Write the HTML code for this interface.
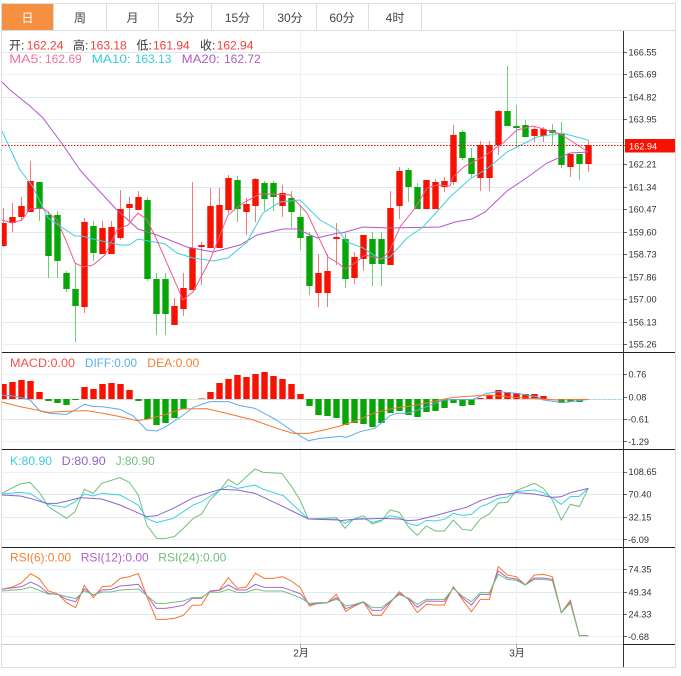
<!DOCTYPE html>
<html><head><meta charset="utf-8"><title>K线图</title>
<style>
html,body{margin:0;padding:0;background:#fff;width:681px;height:676px;overflow:hidden}
svg{display:block;filter:blur(.3px)}
text{font-family:"Liberation Sans","Noto Sans CJK SC",sans-serif;font-size:12px}
.ax text{font-size:9.2px;fill:#333}
.tab text{fill:#444;text-anchor:middle}
polyline{fill:none;stroke-width:1}
.z polyline{vector-effect:non-scaling-stroke}
</style></head><body>
<svg width="681" height="676" viewBox="0 0 681 676" xmlns="http://www.w3.org/2000/svg">
<defs><clipPath id="c"><rect x="2" y="31" width="621" height="613"/></clipPath></defs>
<rect x="1.5" y="3.5" width="674" height="664" fill="#fff" stroke="#ddd"/>
<!-- tabs -->
<rect x="2" y="4" width="51" height="26" fill="#f58f42"/>
<path d="M53.5 4V30M106.5 4V30M158.5 4V30M211.5 4V30M263.5 4V30M316.5 4V30M368.5 4V30M421.5 4V30M2 30.5H675" stroke="#ddd" fill="none"/>
<g class="tab">
<text x="27.5" y="22" style="fill:#fff">日</text><text x="80" y="22">周</text><text x="132.5" y="22">月</text><text x="185" y="22">5分</text><text x="237.5" y="22">15分</text><text x="290" y="22">30分</text><text x="342" y="22">60分</text><text x="395" y="22">4时</text>
</g>
<!-- grid -->
<path d="M2 52.5H623M2 97.5H623M2 142.5H623M2 187.5H623M2 232.5H623M2 277.5H623M2 322.5H623M2 419.5H623M2 494.5H623M2 517.5H623M2 592.5H623M2 614.5H623" stroke="#dfe8ed" fill="none"/>
<path d="M2 74.5H623M2 119.5H623M2 164.5H623M2 209.5H623M2 254.5H623M2 299.5H623M2 344.5H623M2 374.5H623M2 441.5H623M2 472.5H623M2 539.5H623M2 569.5H623M2 636.5H623M300.5 31V644M516.5 31V644" stroke="#ebf1f4" fill="none"/>
<g clip-path="url(#c)">
<!-- wicks -->
<path fill="none" stroke="#f87878" d="M3.5 208V247M12.5 203V232M21.5 197V221M30.5 161V212M84.5 218V313M102.5 221V254M111.5 221V254M120.5 190V240M129.5 197V222M138.5 191V210M174.5 298V325M183.5 273V316M192.5 182V290M201.5 242V285M210.5 188V248M219.5 188V248M228.5 175V213M246.5 198V235M255.5 178V222M282.5 185V217M318.5 254V307M327.5 254V307M336.5 223V265M354.5 252V284M363.5 235V271M390.5 191V265M399.5 167V219M426.5 180V209M435.5 179V209M444.5 177V192M453.5 125V185M480.5 141V191M489.5 141V191M498.5 110V155M534.5 127V142M543.5 127V142M570.5 154V177M588.5 140V172"/>
<path fill="none" stroke="#70cc70" d="M39.5 182V221M48.5 211V278M57.5 211V278M66.5 271V292M75.5 263V342M93.5 221V261M147.5 197V281M156.5 273V335M165.5 273V335M237.5 176V222M264.5 181V211M273.5 181V211M291.5 191V228M300.5 205V250M309.5 232V295M345.5 233V288M372.5 232V286M381.5 232V286M408.5 168V202M417.5 183V209M462.5 130V160M471.5 148V178M507.5 66V126M516.5 105V148M525.5 120V137M552.5 124V145M561.5 122V168M579.5 154V180"/>
<!-- bodies -->
<path fill="none" stroke="#f61100" stroke-width="6.4" d="M3.5 223V246M12.5 217V223M21.5 206V217M30.5 181V212M84.5 222V307M102.5 228V254M111.5 227V254M120.5 209V238M129.5 204V208M138.5 197V210M174.5 306V325M183.5 288V309M192.5 248V290M201.5 245V247M210.5 206V248M219.5 205V248M228.5 178V210M246.5 204V212M255.5 179V206M282.5 193V206M318.5 273V293M327.5 271V293M336.5 237V239M354.5 257V278M363.5 235V259M390.5 208V265M399.5 171V206M426.5 180V209M435.5 182V209M444.5 181V187M453.5 135V182M480.5 145V178M489.5 145V178M498.5 111V145M534.5 129V136M543.5 129V136M570.5 154V167M588.5 145V164"/>
<path fill="none" stroke="#08a508" stroke-width="6.4" d="M39.5 182V209M48.5 215V256M57.5 215V261M66.5 273V289M75.5 289V306M93.5 226V253M147.5 200V279M156.5 279V314M165.5 279V314M237.5 180V209M264.5 183V199M273.5 183V197M291.5 198V212M300.5 217V238M309.5 236V286M345.5 239V279M372.5 239V264M381.5 239V264M408.5 170V187M417.5 187V209M462.5 132V158M471.5 158V174M507.5 111V126M516.5 126V128M525.5 125V137M552.5 130V133M561.5 134V165M579.5 154V164"/>
<!-- MA lines -->
<polyline stroke="#b158c8" points="2,82 10,90 30,106 43,118 63,145 80,170 88,179 117,210 138,229 157,235 187,247 213,252 240,245 257,235 283,229 297,229 317,238 338,233 342,233 363,227 390,228 440,227 455,222 472,219 485,212 507,191 525,179 547,163 570,153 588,152"/>
<polyline stroke="#3fcfe0" points="2,131 20,170 27,179 33,187 48,218 75,236 82,236 93,239 120,245 129,245 138,239 165,244 177,253 193,258 213,261 228,258 247,242 263,213 280,202 300,200 320,220 338,230 340,233 347,242 363,248 380,259 390,257 407,238 423,227 450,197 470,179 488,168 507,152 537,137 562,133 588,140"/>
<polyline stroke="#ee5c8e" points="2,220 12,223 22,220 30,209 43,208 57,220 67,243 75,263 83,267 93,265 105,255 117,230 128,225 138,213 147,220 156,238 183,300 193,292 210,260 228,215 243,203 260,194 273,194 290,195 307,213 328,257 338,263 345,269 355,263 365,255 382,259 390,250 400,227 415,208 427,188 437,185 450,186 453,177 465,166 483,157 503,143 517,130 533,126 560,134 573,142 588,152"/>
<!-- last price dashed -->
<path d="M2 145.5H623" stroke="#e8120a" stroke-dasharray="1.5 1.5" fill="none"/>
<!-- MACD bars -->
<path d="M2 399.5H623" stroke="#d8dde0" fill="none"/>
<path fill="none" stroke="#f61100" stroke-width="6.4" d="M3.5 384V399M12.5 382V399M21.5 380V399M30.5 381V399M39.5 392V399M84.5 387V399M93.5 389V399M102.5 384V399M111.5 383V399M120.5 384V399M129.5 390V399M201.5 398.5V399M210.5 392V399M219.5 383V399M228.5 379V399M237.5 375V399M246.5 377V399M255.5 374V399M264.5 372V399M273.5 376V399M282.5 379V399M291.5 384V399M300.5 394V399M480.5 398V399M489.5 395V399M498.5 390V399M507.5 392V399M516.5 393V399M525.5 394V399M534.5 394V399M543.5 396V399"/>
<path fill="none" stroke="#08a508" stroke-width="6.4" d="M48.5 399V401M57.5 399V403M66.5 399V405M75.5 399V400M138.5 399V401M147.5 399V419M156.5 399V425M165.5 399V423M174.5 399V418M183.5 399V409M309.5 399V406M318.5 399V415M327.5 399V416M336.5 399V418M345.5 399V425M354.5 399V423M363.5 399V424M372.5 399V427M381.5 399V423M390.5 399V413M399.5 399V411M408.5 399V415M417.5 399V417M426.5 399V412M435.5 399V411M444.5 399V408M453.5 399V403M462.5 399V406M471.5 399V405M561.5 399V403M570.5 399V402M579.5 399V402"/>
<path d="M588 399.5H622" stroke="#a8d4f4" stroke-dasharray="3 2" fill="none"/>
<g class="z">
<g transform="translate(0 350) scale(.33333)">
<polyline stroke="#5aacf0" points="0,135 30,137 60,142 90,150 120,183 150,190 200,193 225,180 253,163 280,170 305,170 360,178 400,198 440,240 470,243 495,232 550,195 580,172 630,155 685,155 720,167 765,175 830,210 880,245 925,272 960,265 1020,259"/>
<polyline stroke="#f7762a" points="0,155 60,170 110,180 145,187 180,185 225,183 260,182 310,190 360,200 410,212 440,208 500,192 545,177 620,176 680,190 760,210 830,235 880,250 925,250 980,238 1020,228"/>
</g>
<g transform="translate(340 350) scale(.33333)">
<polyline stroke="#5aacf0" points="0,259 20,262 60,245 105,235 150,197 170,190 200,190 240,178 310,150 400,148 440,130 475,125 530,130 590,140 610,150 670,158 745,148"/>
<polyline stroke="#f7762a" points="0,228 50,212 100,190 160,175 230,165 310,148 340,142 400,138 450,135 530,143 590,146 650,150 745,148"/>
</g>
<!-- KDJ -->
<g transform="translate(0 450) scale(.33333)">
<polyline stroke="#6fc17a" points="5,130 60,102 90,97 120,130 145,170 200,205 225,185 253,118 280,130 305,100 360,83 388,97 415,135 440,225 470,265 497,265 523,260 550,235 580,205 605,192 630,150 660,120 685,88 712,105 765,57 790,67 845,70 875,110 900,150 925,207 1009,203 1020,215"/>
<polyline stroke="#3fcfe0" points="5,132 60,127 90,130 140,163 195,172 225,155 253,132 280,138 305,130 360,135 415,165 440,205 470,218 520,205 580,165 605,155 660,120 685,107 712,115 765,105 790,118 850,137 925,207 1015,208 1020,212"/>
<polyline stroke="#8e63cf" points="5,135 60,138 90,145 140,160 170,160 195,155 240,143 305,147 360,165 440,200 470,197 520,175 580,143 660,118 712,120 765,130 850,170 925,207 1015,210 1020,212"/>
</g>
<g transform="translate(340 450) scale(.33333)">
<polyline stroke="#6fc17a" points="0,215 15,235 40,208 70,197 97,222 125,212 150,180 178,187 205,230 232,256 259,228 286,243 313,243 340,210 367,238 394,241 421,207 448,192 475,159 502,157 529,122 583,100 610,115 637,150 664,210 691,163 718,170 745,115"/>
<polyline stroke="#3fcfe0" points="0,212 15,220 40,208 70,205 97,217 125,210 150,197 178,202 205,220 232,227 259,211 286,213 313,208 340,190 367,196 394,193 421,170 448,160 475,145 502,141 529,125 583,120 610,128 637,143 664,163 691,140 718,139 745,115"/>
<polyline stroke="#8e63cf" points="0,212 40,208 125,205 178,207 205,212 232,210 286,197 340,182 380,172 421,152 475,135 529,128 583,132 637,142 664,140 691,128 745,115"/>
</g>
<!-- RSI -->
<g transform="translate(0 546) scale(.33333)">
<polyline stroke="#f7762a" points="5,130 38,123 65,110 92,83 118,98 145,135 172,143 200,170 227,185 253,118 280,155 307,122 334,120 361,97 388,92 415,83 442,155 469,220 496,220 523,217 550,208 577,178 604,177 631,135 658,132 685,95 712,127 739,123 766,82 793,97 820,97 847,92 874,105 901,125 928,180 955,172 982,170 1009,145 1020,165"/>
<polyline stroke="#b261cf" points="5,130 65,122 92,108 118,120 145,142 172,145 200,160 227,167 253,128 280,148 307,132 334,130 361,120 415,115 442,150 469,187 496,187 523,183 550,178 577,157 604,157 631,135 658,133 685,117 712,132 739,132 766,115 793,124 847,124 901,143 928,175 982,170 1009,155 1020,165"/>
<polyline stroke="#6fc17a" points="5,135 65,130 92,123 145,144 172,145 227,158 253,135 280,146 307,138 334,138 361,132 415,129 442,150 469,172 496,172 550,165 577,155 604,155 631,138 658,139 685,130 712,140 739,139 766,129 793,135 847,135 901,155 928,172 955,170 982,170 1009,160 1020,165"/>
</g>
<g transform="translate(340 546) scale(.33333)">
<polyline stroke="#f7762a" points="0,165 17,196 44,180 70,168 97,208 124,208 151,170 178,137 205,160 232,200 259,175 286,177 313,177 340,122 367,160 394,197 421,160 448,160 475,62 502,87 529,92 556,117 583,87 610,85 637,92 664,200 691,163 718,269 745,269"/>
<polyline stroke="#b261cf" points="0,165 17,188 44,178 70,168 97,193 124,193 151,167 178,142 205,158 232,184 259,165 313,166 340,125 367,155 394,177 421,145 448,145 475,75 502,95 529,99 556,116 583,96 610,96 637,100 664,200 691,168 718,269 745,269"/>
<polyline stroke="#6fc17a" points="0,165 17,180 44,175 70,167 97,185 124,185 151,165 178,146 205,156 232,175 259,160 313,160 340,127 367,150 394,167 421,140 448,140 475,85 502,100 529,103 556,117 583,100 610,100 637,104 664,200 691,172 718,269 745,269"/>
</g>
</g>
</g>
<!-- separators -->
<path d="M2 352.5H675M2 449.5H675M2 547.5H675M623 644.5H675" stroke="#222" fill="none"/>
<path d="M2 644.5H623" stroke="#ccc" fill="none"/>
<path d="M300.5 644V648M516.5 644V648" stroke="#aaa" fill="none"/>
<path d="M623.5 31V667" stroke="#333" fill="none"/>
<!-- ticks -->
<path stroke="#666" fill="none" d="M624 52.5H627M624 74.5H627M624 97.5H627M624 119.5H627M624 145.5H627M624 164.5H627M624 187.5H627M624 209.5H627M624 232.5H627M624 254.5H627M624 277.5H627M624 299.5H627M624 322.5H627M624 344.5H627M624 374.5H627M624 397.5H627M624 419.5H627M624 441.5H627M624 472.5H627M624 494.5H627M624 517.5H627M624 539.5H627M624 569.5H627M624 592.5H627M624 614.5H627M624 636.5H627"/>
<!-- price tag -->
<rect x="625" y="139" width="50" height="13.5" fill="#f61100"/>
<g class="ax">
<text x="629" y="149.5" style="fill:#fff">162.94</text>
<text x="628.5" y="55.5">166.55</text><text x="628.5" y="77.5">165.69</text><text x="628.5" y="100.5">164.82</text><text x="628.5" y="122.5">163.95</text><text x="628.5" y="167.5">162.21</text><text x="628.5" y="190.5">161.34</text><text x="628.5" y="212.5">160.47</text><text x="628.5" y="235.5">159.60</text><text x="628.5" y="257.5">158.73</text><text x="628.5" y="280.5">157.86</text><text x="628.5" y="302.5">157.00</text><text x="628.5" y="325.5">156.13</text><text x="628.5" y="347.5">155.26</text>
<text x="628.5" y="377.5">0.76</text><text x="628.5" y="400.5">0.08</text><text x="628" y="422.5">-0.61</text><text x="628" y="445">-1.29</text>
<text x="628.5" y="475">108.65</text><text x="628.5" y="497.5">70.40</text><text x="628.5" y="520.5">32.15</text><text x="628" y="543">-6.09</text>
<text x="628.5" y="572.5">74.35</text><text x="628.5" y="595.5">49.34</text><text x="628.5" y="617.5">24.33</text><text x="628" y="640">-0.68</text>
</g>
<!-- legends -->
<g>
<text x="9" y="49.5" fill="#333">开:</text><text x="26.7" y="49.5" fill="#f5403a">162.24</text>
<text x="73" y="49.5" fill="#333">高:</text><text x="90" y="49.5" fill="#f5403a">163.18</text>
<text x="136.5" y="49.5" fill="#333">低:</text><text x="153" y="49.5" fill="#f5403a">161.94</text>
<text x="200" y="49.5" fill="#333">收:</text><text x="216.7" y="49.5" fill="#f5403a">162.94</text>
<text x="9.3" y="63" fill="#f0709a" textLength="33" lengthAdjust="spacingAndGlyphs">MA5:</text><text x="45" y="63" fill="#f0709a">162.69</text>
<text x="91.7" y="63" fill="#3bcbdc" textLength="39" lengthAdjust="spacingAndGlyphs">MA10:</text><text x="134.7" y="63" fill="#3bcbdc">163.13</text>
<text x="181.7" y="63" fill="#b158c8" textLength="38" lengthAdjust="spacingAndGlyphs">MA20:</text><text x="224" y="63" fill="#b158c8">162.72</text>
<text x="10" y="367" fill="#f5504a" textLength="65" lengthAdjust="spacingAndGlyphs">MACD:0.00</text>
<text x="85" y="367" fill="#5aacf0" textLength="52" lengthAdjust="spacingAndGlyphs">DIFF:0.00</text>
<text x="147.3" y="367" fill="#f7812f" textLength="52" lengthAdjust="spacingAndGlyphs">DEA:0.00</text>
<text x="10" y="465" fill="#3ecbe0" textLength="42" lengthAdjust="spacingAndGlyphs">K:80.90</text>
<text x="61.7" y="465" fill="#8e63cf" textLength="44" lengthAdjust="spacingAndGlyphs">D:80.90</text>
<text x="115.7" y="465" fill="#6fc17a" textLength="39" lengthAdjust="spacingAndGlyphs">J:80.90</text>
<text x="10" y="561.5" fill="#f7812f" textLength="61" lengthAdjust="spacingAndGlyphs">RSI(6):0.00</text>
<text x="80.7" y="561.5" fill="#b261cf" textLength="68" lengthAdjust="spacingAndGlyphs">RSI(12):0.00</text>
<text x="158.3" y="561.5" fill="#6fc17a" textLength="68" lengthAdjust="spacingAndGlyphs">RSI(24):0.00</text>
<text x="301" y="656.5" fill="#333" style="font-size:10px" text-anchor="middle">2月</text>
<text x="517" y="656.5" fill="#333" style="font-size:10px" text-anchor="middle">3月</text>
</g>
</svg>
</body></html>
